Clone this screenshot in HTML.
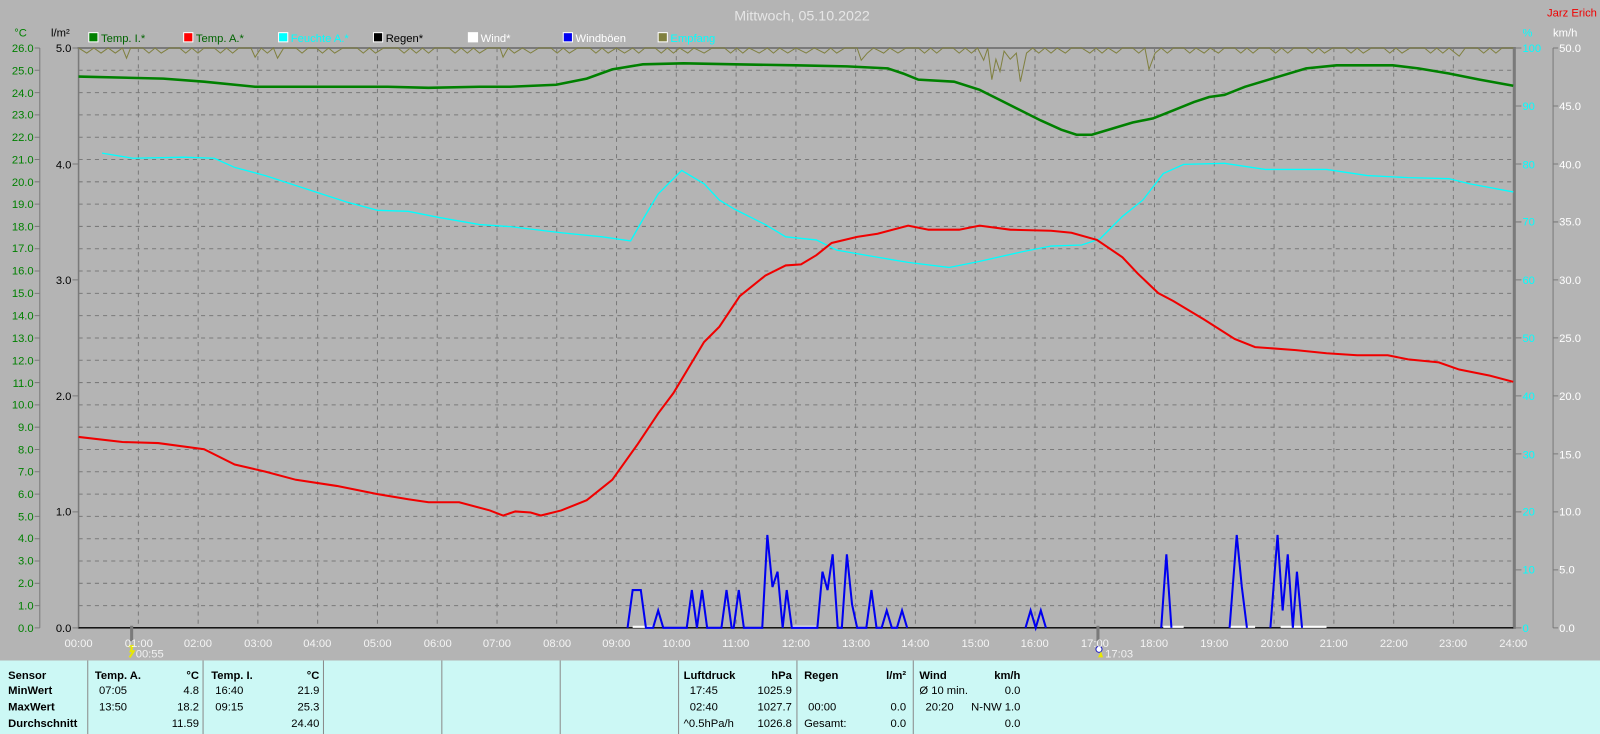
<!DOCTYPE html>
<html><head><meta charset="utf-8"><style>
html,body{margin:0;padding:0;background:#b4b4b4;overflow:hidden}
svg{display:block}
text{font-family:"Liberation Sans",Arial,sans-serif;font-size:11px}
.b{font-weight:bold}
</style></head><body>
<svg width="1600" height="734" viewBox="0 0 1568 719" preserveAspectRatio="none" xmlns="http://www.w3.org/2000/svg">
<rect x="0" y="0" width="1568" height="719" fill="#b4b4b4"/>
<text x="786" y="20" text-anchor="middle" fill="#e6e6e6" style="font-size:14px">Mittwoch, 05.10.2022</text>
<text x="1565" y="16" text-anchor="end" fill="#f00000">Jarz Erich</text>
<!-- axis headers -->
<text x="14" y="36" fill="#008000">°C</text>
<text x="50" y="36" fill="#000">l/m²</text>
<text x="1492" y="36" fill="#00ffff">%</text>
<text x="1522" y="36" fill="#fff">km/h</text>
<!-- legend -->
<g>
<rect x="87" y="32" width="9" height="9" fill="#008000" stroke="#fff"/><text x="99" y="41" fill="#006400">Temp. I.*</text>
<rect x="180" y="32" width="9" height="9" fill="#f00" stroke="#fff"/><text x="192" y="41" fill="#006400">Temp. A.*</text>
<rect x="273" y="32" width="9" height="9" fill="#0ff" stroke="#fff"/><text x="285" y="41" fill="#00ffff">Feuchte A.*</text>
<rect x="366" y="32" width="9" height="9" fill="#000" stroke="#fff"/><text x="378" y="41" fill="#000">Regen*</text>
<rect x="459" y="32" width="9" height="9" fill="#fff" stroke="#fff"/><text x="471" y="41" fill="#fff">Wind*</text>
<rect x="552" y="32" width="9" height="9" fill="#0000f0" stroke="#fff"/><text x="564" y="41" fill="#fff">Windböen</text>
<rect x="645" y="32" width="9" height="9" fill="#808040" stroke="#fff"/><text x="657" y="41" fill="#00ffff">Empfang</text>
</g>
<!-- grid -->
<path d="M77 68.85H1483M77 90.7H1483M77 112.55H1483M77 134.4H1483M77 156.25H1483M77 178.1H1483M77 199.95H1483M77 221.8H1483M77 243.65H1483M77 265.5H1483M77 287.35H1483M77 309.2H1483M77 331.05H1483M77 352.9H1483M77 374.75H1483M77 396.6H1483M77 418.45H1483M77 440.3H1483M77 462.15H1483M77 484H1483M77 505.85H1483M77 527.7H1483M77 549.55H1483M77 571.4H1483M77 593.25H1483" stroke="#7a7a7a" stroke-dasharray="4,4" fill="none"/>
<path d="M135.6 47V615M194.2 47V615M252.7 47V615M311.3 47V615M369.9 47V615M428.5 47V615M487.1 47V615M545.6 47V615M604.2 47V615M662.8 47V615M721.4 47V615M780 47V615M838.5 47V615M897.1 47V615M955.7 47V615M1014.3 47V615M1072.9 47V615M1131.4 47V615M1190 47V615M1248.6 47V615M1307.2 47V615M1365.8 47V615M1424.3 47V615" stroke="#7a7a7a" stroke-dasharray="4,4" fill="none"/>
<!-- borders -->
<path d="M76 47H1485" stroke="#7a7a7a" stroke-width="2"/>
<path d="M77 46V616" stroke="#7a7a7a" stroke-width="1.5"/>
<path d="M1484 46V616" stroke="#7a7a7a" stroke-width="3"/>
<path d="M77 615H1483" stroke="#000" stroke-width="1.3"/>
<!-- left axis -->
<path d="M39 47V615M34 47H39M34 68.85H39M34 90.7H39M34 112.55H39M34 134.4H39M34 156.25H39M34 178.1H39M34 199.95H39M34 221.8H39M34 243.65H39M34 265.5H39M34 287.35H39M34 309.2H39M34 331.05H39M34 352.9H39M34 374.75H39M34 396.6H39M34 418.45H39M34 440.3H39M34 462.15H39M34 484H39M34 505.85H39M34 527.7H39M34 549.55H39M34 571.4H39M34 593.25H39M34 615H39M71 47H77M71 160.6H77M71 274.2H77M71 387.8H77M71 501.4H77M71 615H77" stroke="#7a7a7a"/>
<g fill="#008000" text-anchor="end">
<text x="33" y="51">26.0</text><text x="33" y="73">25.0</text><text x="33" y="95">24.0</text><text x="33" y="116">23.0</text><text x="33" y="138">22.0</text><text x="33" y="160">21.0</text><text x="33" y="182">20.0</text><text x="33" y="204">19.0</text><text x="33" y="226">18.0</text><text x="33" y="247">17.0</text><text x="33" y="269">16.0</text><text x="33" y="291">15.0</text><text x="33" y="313">14.0</text><text x="33" y="335">13.0</text><text x="33" y="357">12.0</text><text x="33" y="379">11.0</text><text x="33" y="400">10.0</text><text x="33" y="422">9.0</text><text x="33" y="444">8.0</text><text x="33" y="466">7.0</text><text x="33" y="488">6.0</text><text x="33" y="510">5.0</text><text x="33" y="531">4.0</text><text x="33" y="553">3.0</text><text x="33" y="575">2.0</text><text x="33" y="597">1.0</text><text x="33" y="619">0.0</text>
</g>
<g fill="#000" text-anchor="end">
<text x="70" y="51">5.0</text><text x="70" y="165">4.0</text><text x="70" y="278">3.0</text><text x="70" y="392">2.0</text><text x="70" y="505">1.0</text><text x="70" y="619">0.0</text>
</g>
<!-- right axes -->
<path d="M1485 47H1491M1485 103.8H1491M1485 160.6H1491M1485 217.4H1491M1485 274.2H1491M1485 331H1491M1485 387.8H1491M1485 444.6H1491M1485 501.4H1491M1485 558.2H1491M1485 615H1491" stroke="#7a7a7a"/>
<path d="M1522 47V615M1522 47H1527M1522 103.8H1527M1522 160.6H1527M1522 217.4H1527M1522 274.2H1527M1522 331H1527M1522 387.8H1527M1522 444.6H1527M1522 501.4H1527M1522 558.2H1527M1522 615H1527" stroke="#7a7a7a"/>
<g fill="#00ffff">
<text x="1492" y="51">100</text><text x="1492" y="108">90</text><text x="1492" y="165">80</text><text x="1492" y="221">70</text><text x="1492" y="278">60</text><text x="1492" y="335">50</text><text x="1492" y="392">40</text><text x="1492" y="449">30</text><text x="1492" y="505">20</text><text x="1492" y="562">10</text><text x="1492" y="619">0</text>
</g>
<g fill="#fff">
<text x="1528" y="51">50.0</text><text x="1528" y="108">45.0</text><text x="1528" y="165">40.0</text><text x="1528" y="221">35.0</text><text x="1528" y="278">30.0</text><text x="1528" y="335">25.0</text><text x="1528" y="392">20.0</text><text x="1528" y="449">15.0</text><text x="1528" y="505">10.0</text><text x="1528" y="562">5.0</text><text x="1528" y="619">0.0</text>
</g>
<!-- Empfang -->
<polyline fill="none" stroke="#808040" stroke-width="1" points="77,47 85,52 92,47 99,52 106,47 113,52 120,47 124,57 128,47 140,47 146,52 152,47 158,52 166,47 176,47 182,52 188,47 194,52 200,47 210,47 216,52 222,47 228,52 234,47 246,47 250,56 256,47 262,52 268,47 272,57 278,47 290,47 296,52 302,47 310,47 316,52 322,47 328,52 336,47 350,47 356,52 362,47 368,52 376,47 390,47 396,52 402,47 408,52 414,47 420,52 426,47 440,47 446,52 452,47 458,52 464,47 470,52 478,47 490,47 493,56 498,47 504,52 512,47 520,52 528,47 540,47 546,52 552,47 558,52 566,47 578,47 584,52 590,47 596,52 604,47 612,52 620,47 626,52 632,47 642,47 648,52 654,47 660,52 666,47 674,52 680,47 690,52 698,47 710,47 716,52 722,47 728,52 734,47 744,52 752,47 758,52 764,47 772,52 780,47 790,52 798,47 808,52 814,47 820,52 828,47 840,47 844,59 850,52 856,47 866,52 872,47 880,52 888,47 900,47 906,52 912,47 918,52 924,47 934,47 940,52 946,47 952,52 958,47 964,59 968,47 972,78 976,58 980,70 984,50 990,58 996,52 1000,80 1006,52 1012,47 1018,52 1024,47 1030,52 1036,47 1044,52 1050,47 1060,47 1068,52 1074,47 1080,52 1086,47 1094,52 1100,47 1110,47 1116,52 1122,47 1126,68 1132,52 1138,47 1144,52 1150,47 1160,47 1166,52 1172,47 1180,52 1186,47 1194,52 1200,47 1210,47 1216,52 1222,47 1228,52 1234,47 1244,47 1250,52 1256,47 1262,52 1268,47 1280,47 1286,52 1292,47 1298,52 1306,47 1318,47 1324,52 1330,47 1336,52 1344,47 1356,47 1362,52 1368,47 1374,52 1382,47 1396,47 1402,52 1408,47 1414,52 1420,47 1430,55 1436,47 1448,47 1454,52 1460,47 1466,52 1472,47 1483,47"/>
<!-- Temp I -->
<polyline fill="none" stroke="#008000" stroke-width="2.5" points="77,75 160,77 200,80 250,85 300,85 380,85 420,86 470,85 500,85 545,83 575,77 600,68 630,63 670,62 720,63 780,64 830,65 870,67 885,72 900,78 935,80 960,88 980,98 1000,108 1020,118 1040,127 1055,132 1070,132 1090,126 1110,120 1130,116 1150,108 1170,100 1185,95 1200,93 1220,85 1250,76 1280,67 1310,64 1365,64 1390,67 1420,72 1450,78 1483,84"/>
<!-- Humidity -->
<polyline fill="none" stroke="#00ffff" stroke-width="1.3" points="100,150 130,155 180,154 210,155 230,164 260,172 300,185 340,198 370,206 400,207 430,213 470,220 500,222 550,228 590,232 618,236 630,215 645,190 668,167 690,180 705,196 720,205 750,220 770,232 800,235 820,245 860,252 890,257 930,262 960,256 1000,247 1030,241 1060,240 1078,234 1100,212 1120,196 1140,170 1160,161 1200,160 1240,166 1300,166 1340,172 1380,174 1420,175 1440,180 1483,188"/>
<!-- Temp A -->
<polyline fill="none" stroke="#f00000" stroke-width="2" points="77,428 120,433 155,434 200,440 230,455 260,462 290,470 330,476 350,480 370,484 400,489 420,492 450,492 480,500 493,505 505,501 520,502 530,505 550,500 575,490 600,470 625,435 645,405 660,385 675,360 690,335 705,320 725,290 750,270 770,260 785,259 800,250 815,238 840,232 860,229 890,221 910,225 940,225 960,221 990,225 1030,226 1050,228 1075,235 1100,252 1115,268 1135,287 1150,295 1180,313 1210,332 1230,340 1270,343 1300,346 1330,348 1360,348 1380,352 1410,355 1430,362 1460,368 1483,374"/>
<!-- Wind white -->
<path d="M620 614H640M775 614H800M1140 614H1160M1205 614H1230M1255 614H1300" stroke="#fff" stroke-width="2"/>
<!-- Windböen -->
<polyline fill="none" stroke="#0000f0" stroke-width="2" points="615,615 620,578 628,578 633,615 640,615 645,598 650,615 673,615 678,578 683,615 688,578 693,615 707,615 712,578 717,615 719,615 724,578 729,615 747,615 752,524 757,575 762,560 767,615 771,578 776,615 801,615 806,560 811,578 816,543 821,615 825,615 830,543 835,592 840,615 849,615 854,578 859,615 864,615 869,598 874,615 879,615 884,598 889,615"/>
<polyline fill="none" stroke="#0000f0" stroke-width="2" points="1005,615 1010,598 1015,615 1020,598 1025,615"/>
<polyline fill="none" stroke="#0000f0" stroke-width="2" points="1138,615 1143,543 1148,615"/>
<polyline fill="none" stroke="#0000f0" stroke-width="2" points="1205,615 1212,524 1217,575 1222,615"/>
<polyline fill="none" stroke="#0000f0" stroke-width="2" points="1245,615 1252,524 1257,598 1262,543 1267,615 1271,560 1276,615"/>
<!-- sun markers -->
<path d="M129 613V628M1076 613V628" stroke="#7a7a7a" stroke-width="3"/>
<path d="M126 633l4 0-2 5 3 0-4 6" stroke="#e8e800" stroke-width="2" fill="none"/>
<text x="133" y="644" fill="#f0f0f0">00:55</text>
<circle cx="1077" cy="636" r="3" fill="#fff" stroke="#2020c0" stroke-width="1"/>
<path d="M1076 644l3-6 2 6z" fill="#e8e800"/>
<text x="1083" y="644" fill="#f0f0f0">17:03</text>
<!-- time labels -->
<g fill="#f4f4f4" text-anchor="middle">
<text x="77" y="634">00:00</text><text x="136" y="634">01:00</text><text x="194" y="634">02:00</text><text x="253" y="634">03:00</text><text x="311" y="634">04:00</text><text x="370" y="634">05:00</text><text x="429" y="634">06:00</text><text x="487" y="634">07:00</text><text x="546" y="634">08:00</text><text x="604" y="634">09:00</text><text x="663" y="634">10:00</text><text x="721" y="634">11:00</text><text x="780" y="634">12:00</text><text x="839" y="634">13:00</text><text x="897" y="634">14:00</text><text x="956" y="634">15:00</text><text x="1014" y="634">16:00</text><text x="1073" y="634">17:00</text><text x="1131" y="634">18:00</text><text x="1190" y="634">19:00</text><text x="1249" y="634">20:00</text><text x="1307" y="634">21:00</text><text x="1366" y="634">22:00</text><text x="1424" y="634">23:00</text><text x="1483" y="634">24:00</text>
</g>
<!-- table -->
<rect x="0" y="647" width="1568" height="72" fill="#ccf8f5"/>
<path d="M86 647V719M199 647V719M317 647V719M433 647V719M549 647V719M665 647V719M781 647V719M895 647V719" stroke="#8a8a8a"/>
<g fill="#000">
<text class="b" x="8" y="665">Sensor</text><text class="b" x="8" y="680">MinWert</text><text class="b" x="8" y="696">MaxWert</text><text class="b" x="8" y="712">Durchschnitt</text>
<text class="b" x="93" y="665">Temp. A.</text><text class="b" x="195" y="665" text-anchor="end">°C</text>
<text x="97" y="680">07:05</text><text x="195" y="680" text-anchor="end">4.8</text>
<text x="97" y="696">13:50</text><text x="195" y="696" text-anchor="end">18.2</text>
<text x="195" y="712" text-anchor="end">11.59</text>
<text class="b" x="207" y="665">Temp. I.</text><text class="b" x="313" y="665" text-anchor="end">°C</text>
<text x="211" y="680">16:40</text><text x="313" y="680" text-anchor="end">21.9</text>
<text x="211" y="696">09:15</text><text x="313" y="696" text-anchor="end">25.3</text>
<text x="313" y="712" text-anchor="end">24.40</text>
<text class="b" x="670" y="665">Luftdruck</text><text class="b" x="776" y="665" text-anchor="end">hPa</text>
<text x="676" y="680">17:45</text><text x="776" y="680" text-anchor="end">1025.9</text>
<text x="676" y="696">02:40</text><text x="776" y="696" text-anchor="end">1027.7</text>
<text x="670" y="712">^0.5hPa/h</text><text x="776" y="712" text-anchor="end">1026.8</text>
<text class="b" x="788" y="665">Regen</text><text class="b" x="888" y="665" text-anchor="end">l/m²</text>
<text x="792" y="696">00:00</text><text x="888" y="696" text-anchor="end">0.0</text>
<text x="788" y="712">Gesamt:</text><text x="888" y="712" text-anchor="end">0.0</text>
<text class="b" x="901" y="665">Wind</text><text class="b" x="1000" y="665" text-anchor="end">km/h</text>
<text x="901" y="680">Ø 10 min.</text><text x="1000" y="680" text-anchor="end">0.0</text>
<text x="907" y="696">20:20</text><text x="1000" y="696" text-anchor="end">N-NW 1.0</text>
<text x="1000" y="712" text-anchor="end">0.0</text>
</g>
</svg>
</body></html>
